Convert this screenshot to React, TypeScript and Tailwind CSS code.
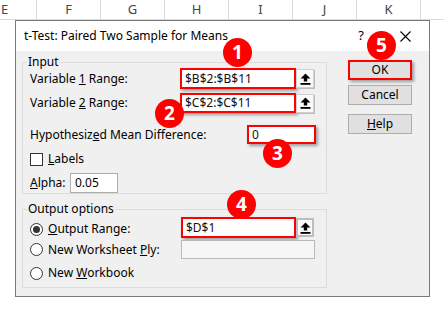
import * as React from "react"

const columns = ["E", "F", "G", "H", "I", "J", "K"]

function Badge({ n, className }: { n: number; className: string }) {
  return (
    <div
      className={
        "absolute w-[29px] h-[29px] rounded-full bg-[#ff0000] text-white flex items-center justify-center text-[19px] font-bold leading-none font-['Open_Sans',sans-serif] " +
        className
      }
    >
      {n}
    </div>
  )
}

function PickButton({ focused }: { focused?: boolean }) {
  return (
    <div
      className={
        "w-[18px] h-[19px] flex items-center justify-center bg-[#fafafa] " +
        (focused ? "border-2 border-[#bdbdbd]" : "border border-[#cfcfcf] shadow-[1px_1px_0_#bdbdbd]")
      }
    >
      <svg width="11" height="12" viewBox="0 0 11 12">
        <path d="M5.5 0.5 L10.5 5.5 L7.2 5.5 L7.2 8.6 L3.8 8.6 L3.8 5.5 L0.5 5.5 Z" fill="#000" />
        <rect x="0.5" y="10" width="10" height="1.8" fill="#000" />
      </svg>
    </div>
  )
}

function RedBox({ value, className }: { value: string; className: string }) {
  return (
    <div
      className={
        "border-2 border-[#ff0000] bg-white shadow-[2px_2px_3px_rgba(0,0,0,0.35)] flex items-center pl-[3px] text-[12px] text-[#111] " +
        className
      }
    >
      {value}
    </div>
  )
}

function Radio({ checked }: { checked?: boolean }) {
  return (
    <div className="w-[13px] h-[13px] rounded-full border border-[#333] bg-white flex items-center justify-center shrink-0">
      {checked && <div className="w-[7px] h-[7px] rounded-full bg-[#333]" />}
    </div>
  )
}

export default function App() {
  return (
    <div className="w-[444px] h-[313px] overflow-hidden bg-white font-['Noto_Sans',sans-serif] text-black">
      {/* sheet column header */}
      <div className="flex h-[20px] -ml-[27px] border-b border-[#dadada]">
        {columns.map((c) => (
          <div
            key={c}
            className="w-[64px] shrink-0 border-r border-[#dadada] flex items-center justify-center text-[13px] text-[#444]"
          >
            {c}
          </div>
        ))}
      </div>

      {/* dialog */}
      <div className="relative ml-[15px] w-[415px] h-[277px] border border-[#7a7a7a] bg-[#f0f0f0] flex flex-col">
        <div className="h-[30px] shrink-0 bg-white flex items-center pl-[8px] pr-[18px] text-[12px]">
          <span>t-Test: Paired Two Sample for Means</span>
          <div className="ml-auto flex items-center gap-[36px]">
            <span className="text-[13px]">?</span>
            <svg width="11" height="11" viewBox="0 0 11 11">
              <path d="M0.5 0.5 L10.5 10.5 M10.5 0.5 L0.5 10.5" stroke="#000" strokeWidth="1.1" />
            </svg>
          </div>
        </div>

        <div className="flex pl-[6px] text-[12px]">
          <div className="w-[305px] shrink-0">
            <fieldset className="mt-[5px] border border-[#dcdcdc]">
              <legend className="ml-[4px] px-[1px] leading-[12px]">Input</legend>
              <div className="pl-[7px]">
                <div className="flex items-center h-[21px]">
                  <div className="w-[150px]">
                    Variable <span className="underline">1</span> Range:
                  </div>
                  <RedBox value="$B$2:$B$11" className="w-[116px] h-[21px]" />
                  <PickButton />
                </div>
                <div className="flex items-center h-[20px] mt-[4px]">
                  <div className="w-[150px]">
                    Variable <span className="underline">2</span> Range:
                  </div>
                  <RedBox value="$C$2:$C$11" className="w-[116px] h-[20px]" />
                  <PickButton />
                </div>
                <div className="flex items-center h-[19px] mt-[12px]">
                  <div className="w-[217px]">
                    Hypothesiz<span className="underline">e</span>d Mean Difference:
                  </div>
                  <RedBox value="0" className="w-[69px] h-[19px]" />
                </div>
                <div className="flex items-center h-[16px] mt-[7px] gap-[5px]">
                  <div className="w-[13px] h-[13px] border border-[#333] bg-white" />
                  <span>
                    <span className="underline">L</span>abels
                  </span>
                </div>
                <div className="flex items-center h-[20px] mt-[6px]">
                  <div className="w-[40px]">
                    <span className="underline">A</span>lpha:
                  </div>
                  <div className="w-[48px] h-[20px] border border-[#adadad] bg-white flex items-center pl-[4px]">
                    0.05
                  </div>
                </div>
              </div>
            </fieldset>

            <fieldset className="mt-[9px] border border-[#dcdcdc]">
              <legend className="ml-[4px] px-[1px] leading-[12px]">Output options</legend>
              <div className="pl-[7px] pb-[5px]">
                <div className="flex items-center h-[21px] mt-[2px]">
                  <div className="w-[151px] flex items-center gap-[5px] pt-[3px]">
                    <Radio checked />
                    <span>
                      <span className="underline">O</span>utput Range:
                    </span>
                  </div>
                  <RedBox value="$D$1" className="w-[115px] h-[21px]" />
                  <PickButton focused />
                </div>
                <div className="flex items-center h-[19px] mt-[2px]">
                  <div className="w-[151px] flex items-center gap-[5px]">
                    <Radio />
                    <span>
                      New Worksheet <span className="underline">P</span>ly:
                    </span>
                  </div>
                  <div className="w-[134px] h-[19px] border border-[#b9b9b9] bg-[#f6f6f6]" />
                </div>
                <div className="flex items-center h-[18px] mt-[5px] gap-[5px]">
                  <Radio />
                  <span>
                    New <span className="underline">W</span>orkbook
                  </span>
                </div>
              </div>
            </fieldset>
          </div>

          <div className="ml-[21px] flex flex-col w-[64px]">
            <div className="mt-[9px] h-[20px] border-2 border-[#ff0000] bg-[#e1e1e1] shadow-[2px_2px_3px_rgba(0,0,0,0.35)] flex items-center justify-center">
              OK
            </div>
            <div className="mt-[5px] h-[20px] border border-[#adadad] bg-[#e1e1e1] flex items-center justify-center">
              Cancel
            </div>
            <div className="mt-[9px] h-[20px] border border-[#adadad] bg-[#e1e1e1] flex items-center justify-center">
              <span>
                <span className="underline">H</span>elp
              </span>
            </div>
          </div>
        </div>

        <Badge n={1} className="left-[207px] top-[17px]" />
        <Badge n={2} className="left-[139px] top-[78px]" />
        <Badge n={3} className="left-[247px] top-[118px]" />
        <Badge n={4} className="left-[211px] top-[169px]" />
        <Badge n={5} className="left-[351px] top-[10px]" />
      </div>
    </div>
  )
}
